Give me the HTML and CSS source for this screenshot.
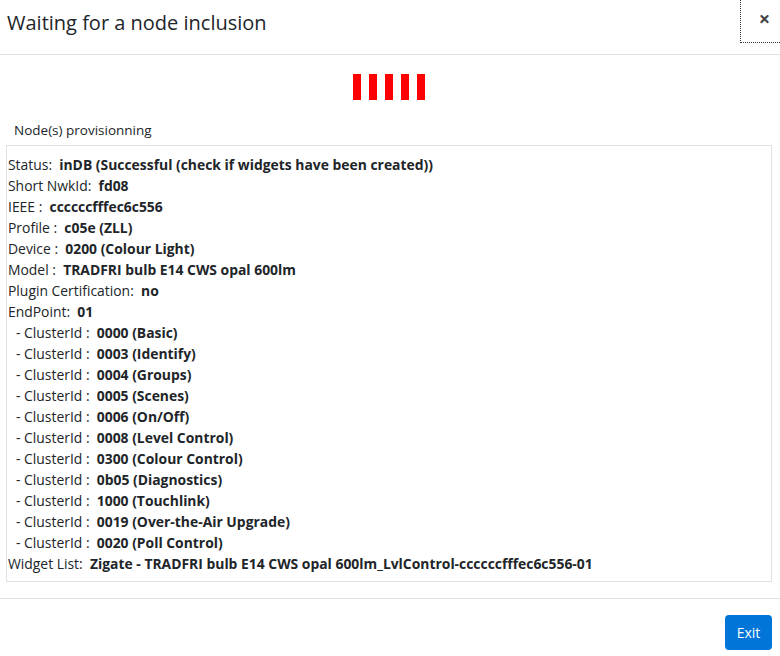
FILE: index.html
```html
<!DOCTYPE html>
<html>
<head>
<meta charset="utf-8">
<link rel="stylesheet" href="styles.css">
</head>
<body>
<div class="modal">
  <div class="modal-header">
    <h5 class="modal-title">Waiting for a node inclusion</h5>
    <button class="close" type="button">&times;</button>
  </div>
  <div class="modal-body">
    <div class="spinner">
      <span class="bar"></span><span class="bar"></span><span class="bar"></span><span class="bar"></span><span class="bar"></span>
    </div>
    <div class="label">Node(s) provisionning</div>
    <div class="panel">
      <div class="row">Status:&nbsp; <b>inDB (Successful (check if widgets have been created))</b></div>
      <div class="row">Short NwkId:&nbsp; <b>fd08</b></div>
      <div class="row">IEEE :&nbsp; <b>ccccccfffec6c556</b></div>
      <div class="row">Profile :&nbsp; <b>c05e (ZLL)</b></div>
      <div class="row">Device :&nbsp; <b>0200 (Colour Light)</b></div>
      <div class="row">Model :&nbsp; <b>TRADFRI bulb E14 CWS opal 600lm</b></div>
      <div class="row">Plugin Certification:&nbsp; <b>no</b></div>
      <div class="row">EndPoint:&nbsp; <b>01</b></div>
      <div class="row sub">- ClusterId :&nbsp; <b>0000 (Basic)</b></div>
      <div class="row sub">- ClusterId :&nbsp; <b>0003 (Identify)</b></div>
      <div class="row sub">- ClusterId :&nbsp; <b>0004 (Groups)</b></div>
      <div class="row sub">- ClusterId :&nbsp; <b>0005 (Scenes)</b></div>
      <div class="row sub">- ClusterId :&nbsp; <b>0006 (On/Off)</b></div>
      <div class="row sub">- ClusterId :&nbsp; <b>0008 (Level Control)</b></div>
      <div class="row sub">- ClusterId :&nbsp; <b>0300 (Colour Control)</b></div>
      <div class="row sub">- ClusterId :&nbsp; <b>0b05 (Diagnostics)</b></div>
      <div class="row sub">- ClusterId :&nbsp; <b>1000 (Touchlink)</b></div>
      <div class="row sub">- ClusterId :&nbsp; <b>0019 (Over-the-Air Upgrade)</b></div>
      <div class="row sub">- ClusterId :&nbsp; <b>0020 (Poll Control)</b></div>
      <div class="row">Widget List:&nbsp; <b>Zigate - TRADFRI bulb E14 CWS opal 600lm_LvlControl-ccccccfffec6c556-01</b></div>
    </div>
  </div>
  <div class="modal-footer">
    <button class="btn" type="button">Exit</button>
  </div>
</div>
</body>
</html>
```

FILE: styles.css
```css
html, body {
  margin: 0;
  padding: 0;
  background: #fff;
}
body {
  font-family: "Open Sans", "Noto Sans", sans-serif;
  color: #212529;
  width: 780px;
  height: 656px;
  overflow: hidden;
}
.modal-header {
  height: 54px;
  border-bottom: 1px solid #dee2e6;
  display: flex;
  justify-content: space-between;
  align-items: flex-start;
}
.modal-title {
  margin: 0;
  padding: 10px 0 0 7px;
  font-size: 20px;
  font-weight: 400;
  line-height: 26px;
}
.close {
  width: 40px;
  height: 43px;
  margin: 0;
  padding: 0 0 4px 8px;
  background: none;
  border: none;
  border-left: 1px dotted #333;
  border-bottom: 1px dotted #333;
  font-size: 20px;
  font-weight: 700;
  color: #444;
  line-height: 1;
  font-family: "Open Sans", sans-serif;
}
.modal-body {
  padding: 19px 8px 16px 6px;
}
.spinner {
  display: flex;
  justify-content: center;
  gap: 8px;
  height: 26px;
}
.bar {
  width: 8px;
  height: 26px;
  background: #ff0000;
}
.label {
  font-size: 13.5px;
  line-height: 18px;
  padding: 21px 0 0 8px;
  margin-bottom: 6px;
}
.panel {
  border: 1px solid #dee2e6;
  padding: 8px 1px 7px 1px;
  font-size: 13.9px;
}
.row {
  line-height: 21px;
  white-space: nowrap;
}
.row.sub {
  padding-left: 8px;
}
.row b {
  font-weight: 700;
}
.modal-footer {
  border-top: 1px solid #dee2e6;
  display: flex;
  justify-content: flex-end;
  padding: 16px 8px 0 0;
}
.btn {
  width: 47px;
  height: 35px;
  background: #0275d8;
  color: #fff;
  border: none;
  border-radius: 4px;
  font-family: "Open Sans", sans-serif;
  font-size: 14px;
  padding: 0;
}
```
